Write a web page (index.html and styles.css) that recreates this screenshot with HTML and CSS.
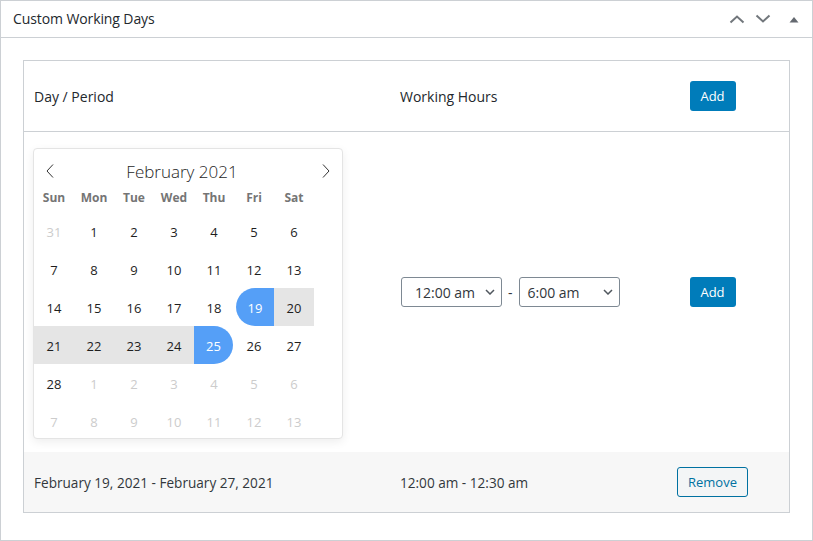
FILE: index.html
```html
<!DOCTYPE html>
<html lang="en">
<head>
<meta charset="utf-8">
<title>Custom Working Days</title>
<link rel="stylesheet" href="styles.css">
</head>
<body>
<div class="postbox">
  <div class="postbox-header">
    <h2 class="postbox-title">Custom Working Days</h2>
    <div class="handle-actions">
      <button class="handle-btn" aria-label="Move up">
        <svg width="16" height="10" viewBox="0 0 16 10"><path d="M1.5 8.5 L8 2.5 L14.5 8.5" fill="none" stroke="currentColor" stroke-width="2"/></svg>
      </button>
      <button class="handle-btn" aria-label="Move down">
        <svg width="16" height="10" viewBox="0 0 16 10"><path d="M1.5 1.5 L8 7.5 L14.5 1.5" fill="none" stroke="currentColor" stroke-width="2"/></svg>
      </button>
      <button class="handle-btn handle-toggle" aria-label="Toggle panel">
        <svg width="10" height="7" viewBox="0 0 10 7"><path d="M0.5 6.5 L5 1 L9.5 6.5 Z" fill="currentColor"/></svg>
      </button>
    </div>
  </div>
  <div class="inside">
    <div class="hours-table">
      <div class="row row-head">
        <div class="cell c1">Day / Period</div>
        <div class="cell c2">Working Hours</div>
        <div class="cell c3"><button class="btn-primary">Add</button></div>
      </div>

      <div class="row row-edit">
        <div class="cell c1 cal-cell">
          <div class="calendar">
            <div class="cal-head">
              <span class="cal-nav">
                <svg width="8" height="14" viewBox="0 0 8 14"><path d="M7 0.5 L1 7 L7 13.5" fill="none" stroke="currentColor" stroke-width="1"/></svg>
              </span>
              <span class="cal-month">February 2021</span>
              <span class="cal-nav">
                <svg width="8" height="14" viewBox="0 0 8 14"><path d="M1 0.5 L7 7 L1 13.5" fill="none" stroke="currentColor" stroke-width="1"/></svg>
              </span>
            </div>
            <div class="cal-dow">
              <span>Sun</span><span>Mon</span><span>Tue</span><span>Wed</span><span>Thu</span><span>Fri</span><span>Sat</span>
            </div>
            <div class="cal-grid">
              <span class="day muted">31</span><span class="day">1</span><span class="day">2</span><span class="day">3</span><span class="day">4</span><span class="day">5</span><span class="day">6</span>
              <span class="day">7</span><span class="day">8</span><span class="day">9</span><span class="day">10</span><span class="day">11</span><span class="day">12</span><span class="day">13</span>
              <span class="day">14</span><span class="day">15</span><span class="day">16</span><span class="day">17</span><span class="day">18</span><span class="day sel-start">19</span><span class="day in-range">20</span>
              <span class="day in-range">21</span><span class="day in-range">22</span><span class="day in-range">23</span><span class="day in-range">24</span><span class="day sel-end">25</span><span class="day">26</span><span class="day">27</span>
              <span class="day">28</span><span class="day muted">1</span><span class="day muted">2</span><span class="day muted">3</span><span class="day muted">4</span><span class="day muted">5</span><span class="day muted">6</span>
              <span class="day muted">7</span><span class="day muted">8</span><span class="day muted">9</span><span class="day muted">10</span><span class="day muted">11</span><span class="day muted">12</span><span class="day muted">13</span>
            </div>
          </div>
        </div>
        <div class="cell c2">
          <div class="time-range">
            <div class="select select-from">
              <span>12:00 am</span>
              <svg class="select-arrow" width="10" height="6" viewBox="0 0 10 6"><path d="M1 1 L5 5 L9 1" fill="none" stroke="currentColor" stroke-width="1.5"/></svg>
            </div>
            <span class="dash">-</span>
            <div class="select select-to">
              <span>6:00 am</span>
              <svg class="select-arrow" width="10" height="6" viewBox="0 0 10 6"><path d="M1 1 L5 5 L9 1" fill="none" stroke="currentColor" stroke-width="1.5"/></svg>
            </div>
          </div>
        </div>
        <div class="cell c3"><button class="btn-primary">Add</button></div>
      </div>

      <div class="row row-item">
        <div class="cell c1">February 19, 2021 - February 27, 2021</div>
        <div class="cell c2">12:00 am - 12:30 am</div>
        <div class="cell c3"><button class="btn-secondary">Remove</button></div>
      </div>
    </div>
  </div>
</div>
</body>
</html>
```

FILE: styles.css
```css
* {
  box-sizing: border-box;
}

html,
body {
  margin: 0;
  padding: 0;
  background: #fff;
}

body {
  font-family: "Open Sans", "Noto Sans", sans-serif;
  font-size: 13px;
  color: #23282d;
}

button {
  font-family: inherit;
  cursor: pointer;
}

.postbox {
  width: 813px;
  height: 541px;
  border: 1px solid #ccd0d4;
  background: #fff;
}

.postbox-header {
  height: 37px;
  border-bottom: 1px solid #ccd0d4;
  display: flex;
  align-items: center;
  justify-content: space-between;
}

.postbox-title {
  margin: 0;
  padding: 0 12px;
  font-size: 14px;
  font-weight: 400;
  line-height: 1.4;
  color: #23282d;
  letter-spacing: -0.1px;
}

.handle-actions {
  display: flex;
  height: 100%;
}

.handle-btn {
  width: 26px;
  height: 100%;
  padding: 0;
  border: 0;
  background: transparent;
  color: #72777c;
  display: flex;
  align-items: center;
  justify-content: center;
}

.handle-toggle {
  width: 36px;
  color: #646970;
}

.inside {
  padding: 22px;
}

.hours-table {
  border: 1px solid #ccd0d4;
}

.row {
  display: grid;
  grid-template-columns: 366px 246px 1fr;
  align-items: center;
}

.cell {
  padding: 0 10px;
  font-size: 13px;
}

.c3 {
  display: flex;
  justify-content: center;
}

.row-head {
  height: 71px;
  border-bottom: 1px solid #ccd0d4;
}

.row-head .cell {
  font-size: 14px;
  color: #23282d;
}

.row-edit {
  height: 320px;
}

.cal-cell {
  align-self: start;
  padding: 16px 0 0 9px;
}

.row-item {
  height: 60px;
  background: #f7f7f7;
}

.row-item .cell {
  color: #32373c;
  font-size: 13.6px;
}

.btn-primary {
  min-width: 46px;
  height: 30px;
  padding: 0 10px;
  border: 0;
  border-radius: 3px;
  background: #007cba;
  color: #fff;
  font-size: 13px;
}

.row-item .btn-secondary {
  height: 30px;
  padding: 0 10px;
  border: 1px solid #0071a1;
  border-radius: 3px;
  background: #f3f5f6;
  color: #0071a1;
  font-size: 13px;
}

/* Calendar */
.calendar {
  width: 310px;
  height: 291px;
  border: 1px solid #e4e4e4;
  border-radius: 4px;
  background: #fff;
  box-shadow: 0 3px 10px rgba(0, 0, 0, 0.07);
  padding-top: 6px;
  overflow: hidden;
}

.cal-head {
  height: 32px;
  display: flex;
  align-items: center;
  padding: 0 6px;
}

.cal-nav {
  width: 20px;
  height: 20px;
  display: flex;
  align-items: center;
  justify-content: center;
  color: #333;
}

.cal-month {
  flex: 1;
  text-align: center;
  padding-right: 12px;
  font-size: 17px;
  font-weight: 300;
  color: #1e1e1e;
}

.cal-dow {
  display: grid;
  grid-template-columns: repeat(7, 40px);
  height: 20px;
  align-items: center;
}

.cal-dow span {
  text-align: center;
  font-size: 12px;
  font-weight: 700;
  color: #757575;
}

.cal-grid {
  margin-top: 5px;
  display: grid;
  grid-template-columns: repeat(7, 40px);
  grid-auto-rows: 38px;
}

.day {
  display: flex;
  align-items: center;
  justify-content: center;
  padding-top: 1px;
  font-size: 13px;
  color: #1e1e1e;
}

.day.muted {
  color: #ccc;
}

.day.in-range {
  background: #e5e5e5;
}

.day.sel-start {
  background: #559ff7;
  color: #fff;
  margin-left: 2px;
  border-radius: 19px 0 0 19px;
}

.day.sel-end {
  background: #559ff7;
  color: #fff;
  margin-right: 1px;
  border-radius: 0 19px 19px 0;
}

/* Time selects */
.time-range {
  display: flex;
  align-items: center;
  gap: 6px;
  padding-left: 1px;
}

.select {
  width: 101px;
  height: 30px;
  border: 1px solid #7e8993;
  border-radius: 3px;
  display: flex;
  align-items: center;
  font-size: 14px;
  color: #32373c;
  padding-right: 6px;
}

.select-from {
  padding-left: 13px;
}

.select-to {
  padding-left: 8px;
}

.select-arrow {
  margin-left: auto;
  color: #50575e;
}

.dash {
  font-size: 14px;
  color: #32373c;
}
```
